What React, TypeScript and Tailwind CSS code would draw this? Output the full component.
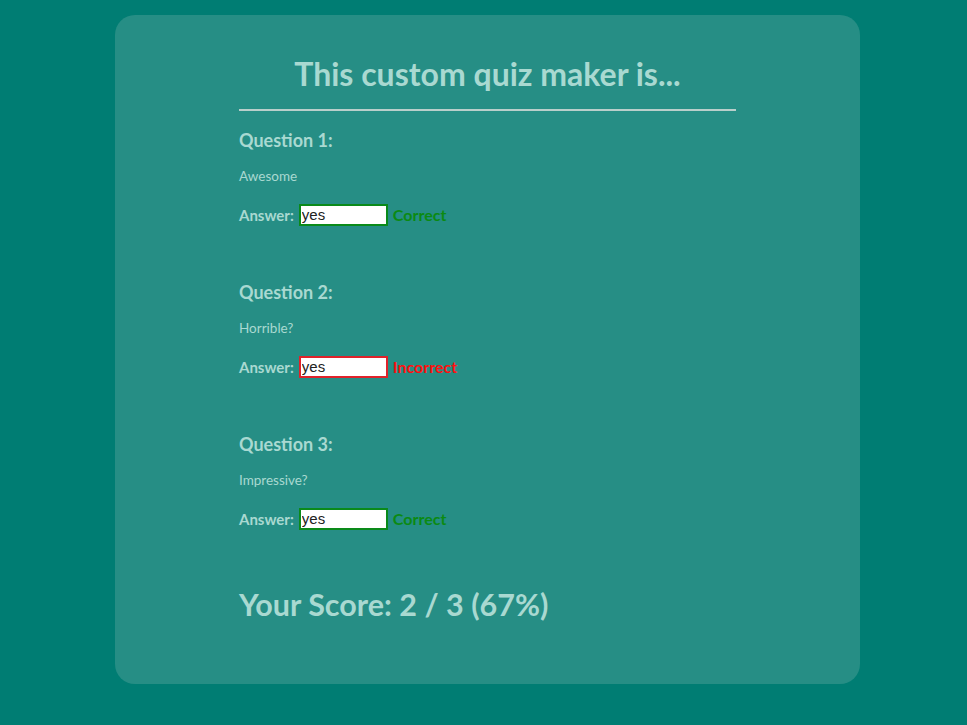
const questions = [
  { label: "Question 1:", text: "Awesome", answer: "yes", correct: true },
  { label: "Question 2:", text: "Horrible?", answer: "yes", correct: false },
  { label: "Question 3:", text: "Impressive?", answer: "yes", correct: true },
];

export default function App() {
  return (
    <div className="min-h-[725px] bg-[#007d73] pt-[15px] pb-[41px] font-['Lato',sans-serif] text-[#a9d9d1]">
      <div className="ml-[115px] w-[745px] h-[669px] rounded-[20px] bg-[#268e85] pt-[39px]">
        <div className="mx-auto w-[497px]">
          <h1 className="text-center text-[32px] font-bold leading-[40px]">
            This custom quiz maker is...
          </h1>
          <div className="mt-[15px] h-[2px] bg-[#b9cfcb]" />

          {questions.map((q) => (
            <div key={q.label} className="mt-[18px] mb-[54px]">
              <h2 className="text-[18px] font-bold leading-[22px]">{q.label}</h2>
              <p className="mt-[16px] text-[13.5px] leading-[18px]">{q.text}</p>
              <div className="mt-[18px] flex items-center">
                <span className="text-[15px] font-bold">Answer:</span>
                <input
                  readOnly
                  value={q.answer}
                  className={
                    "ml-[5px] h-[22px] w-[89px] border-2 bg-white px-[1px] font-['Liberation_Sans',sans-serif] text-[15px] text-[#222] outline-none " +
                    (q.correct ? "border-[#0a8a1a]" : "border-[#e0222a]")
                  }
                />
                <span
                  className={
                    "ml-[5px] text-[16px] font-bold " +
                    (q.correct ? "text-[#0b8a12]" : "text-[#ff1010]")
                  }
                >
                  {q.correct ? "Correct" : "Incorrect"}
                </span>
              </div>
            </div>
          ))}

          <div className="mt-[4px] text-[30.5px] font-bold leading-[38px]">
            Your Score: 2 / 3 (67%)
          </div>
        </div>
      </div>
    </div>
  );
}
